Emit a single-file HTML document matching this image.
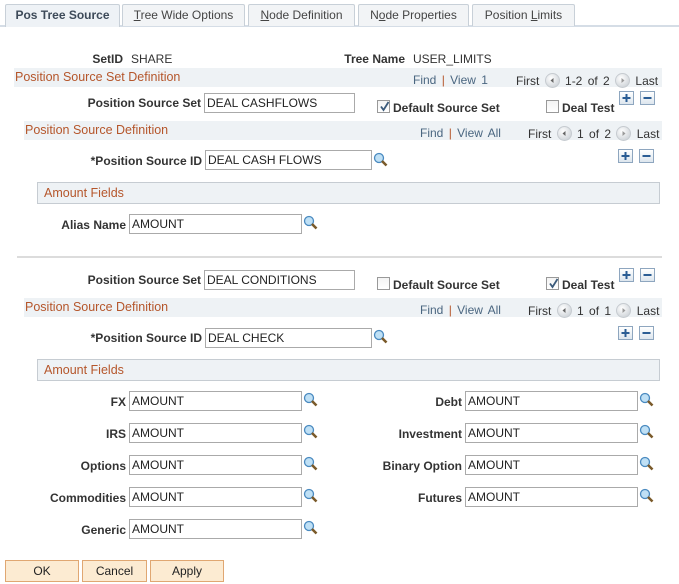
<!DOCTYPE html>
<html><head><meta charset="utf-8">
<style>
*{box-sizing:border-box;margin:0;padding:0}
body{width:679px;height:584px;background:#fff;font-family:"Liberation Sans",Arial,sans-serif;font-size:12px;color:#333;position:relative;overflow:hidden}
.tab{position:absolute;top:4px;height:22px;border:1px solid #c8d0d8;border-bottom:none;background:#f2f4f6;color:#444;font-size:12px;line-height:20px;text-align:center;border-radius:2px 2px 0 0}
.tab.on{background:#eef2f6;font-weight:bold;color:#3d4a59}
.lbl{position:absolute;font-weight:bold;text-align:right;white-space:nowrap;line-height:14px}
.val{position:absolute;white-space:nowrap;line-height:14px}
.inp{position:absolute;height:20px;border:1px solid #aaa;background:#fff;padding-left:2px;line-height:18px;color:#222}
.band{position:absolute;background:#eef2f5;height:19px}
.st{position:absolute;color:#b5562b;font-size:12.5px;line-height:14px;white-space:nowrap}
.nav{position:absolute;color:#4a6680;line-height:14px;white-space:nowrap;word-spacing:2px}
.nav .s{color:#b5562b}
.nav .g{color:#333}
.cb{position:absolute;width:13px;height:13px;border:1px solid #999;background:linear-gradient(#f3f3f3,#fff)}
.cb svg{position:absolute;left:1px;top:0}
.btn{position:absolute;width:15px;height:14px;border:1px solid #8ea6bf;background:linear-gradient(#fff,#dde6ee)}
.lk{position:absolute;width:15px;height:15px}
.arr{display:inline-block;width:15px;height:15px;vertical-align:-3px}
.ob{position:absolute;top:560px;height:22px;background:#fcebd2;border:1px solid #e0a772;text-align:center;line-height:20px;color:#222}
</style></head><body>
<svg width="0" height="0" style="position:absolute"><defs>
<radialGradient id="rg" cx="40%" cy="35%" r="70%"><stop offset="0" stop-color="#fff"/><stop offset="1" stop-color="#cdd2d7"/></radialGradient>
<g id="L"><circle cx="7.5" cy="7.5" r="7" fill="url(#rg)" stroke="#c6cbd0"/><path d="M5.5 7.5l3-2.5v5z" fill="#666"/></g>
<g id="R"><circle cx="7.5" cy="7.5" r="7" fill="url(#rg)" stroke="#c6cbd0"/><path d="M9.5 7.5l-3-2.5v5z" fill="#999"/></g>
<g id="Q"><circle cx="6" cy="6" r="4.5" fill="#bfe0f5" stroke="#4a8ac0" stroke-width="1.3"/><path d="M9 9l4.5 4.5" stroke="#7a5a2a" stroke-width="2.6"/></g>
</defs></svg>

<div style="position:absolute;left:0;top:25px;width:679px;height:2px;background:#d5dde6"></div>
<div class="tab on" style="left:5px;width:115px;height:23px">Pos Tree Source</div>
<div class="tab" style="left:122px;width:123px"><u>T</u>ree Wide Options</div>
<div class="tab" style="left:248px;width:107px"><u>N</u>ode Definition</div>
<div class="tab" style="left:358px;width:111px">N<u>o</u>de Properties</div>
<div class="tab" style="left:472px;width:103px">Position <u>L</u>imits</div>

<div class="lbl" style="right:556px;top:52px">SetID</div>
<div class="val" style="left:131px;top:52px">SHARE</div>
<div class="lbl" style="right:274px;top:52px">Tree Name</div>
<div class="val" style="left:413px;top:52px">USER_LIMITS</div>

<div class="band" style="left:14px;top:68px;width:648px"></div>
<div class="st" style="left:15px;top:70px">Position Source Set Definition</div>
<div class="nav" style="left:413px;top:73px">Find <span class="s">|</span> View 1</div>
<div class="nav" style="left:516px;top:73px"><span class="g">First</span> <svg class="arr"><use href="#L"/></svg> <span class="g">1-2 of 2</span> <svg class="arr"><use href="#R"/></svg> <span class="g">Last</span></div>

<div class="lbl" style="right:478px;top:96px">Position Source Set</div>
<div class="inp" style="left:204px;top:93px;width:151px">DEAL CASHFLOWS</div>
<div class="cb" style="left:377px;top:100px"><svg width="11" height="11"><path d="M2 5.5 L4.5 9 L9.5 1" stroke="#3b5a7a" stroke-width="1.8" fill="none"/></svg></div>
<div class="lbl" style="left:393px;top:101px">Default Source Set</div>
<div class="cb" style="left:546px;top:100px"></div>
<div class="lbl" style="left:562px;top:101px">Deal Test</div>
<div class="btn" style="left:619px;top:91px"><svg width="13" height="12"><path d="M6.5 2v8M2.5 6h8" stroke="#2b5d94" stroke-width="2"/></svg></div>
<div class="btn" style="left:640px;top:91px"><svg width="13" height="12"><path d="M2.5 6h8" stroke="#2b5d94" stroke-width="2"/></svg></div>

<div class="band" style="left:24px;top:121px;width:638px"></div>
<div class="st" style="left:25px;top:123px">Position Source Definition</div>
<div class="nav" style="left:420px;top:126px">Find <span class="s">|</span> View All</div>
<div class="nav" style="left:528px;top:126px"><span class="g">First</span> <svg class="arr"><use href="#L"/></svg> <span class="g">1 of 2</span> <svg class="arr"><use href="#R"/></svg> <span class="g">Last</span></div>

<div class="lbl" style="right:477px;top:154px">*Position Source ID</div>
<div class="inp" style="left:205px;top:150px;width:167px">DEAL CASH FLOWS</div>
<svg class="lk" style="left:373px;top:152px" viewBox="0 0 15 15"><use href="#Q"/></svg>
<div class="btn" style="left:618px;top:149px"><svg width="13" height="12"><path d="M6.5 2v8M2.5 6h8" stroke="#2b5d94" stroke-width="2"/></svg></div>
<div class="btn" style="left:639px;top:149px"><svg width="13" height="12"><path d="M2.5 6h8" stroke="#2b5d94" stroke-width="2"/></svg></div>

<div class="band" style="left:37px;top:182px;width:623px;height:22px;border:1px solid #c6ccd2"></div>
<div class="st" style="left:44px;top:186px">Amount Fields</div>

<div class="lbl" style="right:553px;top:218px">Alias Name</div>
<div class="inp" style="left:129px;top:214px;width:173px">AMOUNT</div>
<svg class="lk" style="left:303px;top:215px" viewBox="0 0 15 15"><use href="#Q"/></svg>

<div style="position:absolute;left:17px;top:256px;width:645px;height:2px;background:#dcdcdc"></div>

<div class="lbl" style="right:478px;top:273px">Position Source Set</div>
<div class="inp" style="left:204px;top:270px;width:151px">DEAL CONDITIONS</div>
<div class="cb" style="left:377px;top:277px"></div>
<div class="lbl" style="left:393px;top:278px">Default Source Set</div>
<div class="cb" style="left:546px;top:277px"><svg width="11" height="11"><path d="M2 5.5 L4.5 9 L9.5 1" stroke="#3b5a7a" stroke-width="1.8" fill="none"/></svg></div>
<div class="lbl" style="left:562px;top:278px">Deal Test</div>
<div class="btn" style="left:619px;top:268px"><svg width="13" height="12"><path d="M6.5 2v8M2.5 6h8" stroke="#2b5d94" stroke-width="2"/></svg></div>
<div class="btn" style="left:640px;top:268px"><svg width="13" height="12"><path d="M2.5 6h8" stroke="#2b5d94" stroke-width="2"/></svg></div>

<div class="band" style="left:24px;top:298px;width:638px"></div>
<div class="st" style="left:25px;top:300px">Position Source Definition</div>
<div class="nav" style="left:420px;top:303px">Find <span class="s">|</span> View All</div>
<div class="nav" style="left:528px;top:303px"><span class="g">First</span> <svg class="arr"><use href="#L"/></svg> <span class="g">1 of 1</span> <svg class="arr"><use href="#R"/></svg> <span class="g">Last</span></div>

<div class="lbl" style="right:477px;top:331px">*Position Source ID</div>
<div class="inp" style="left:205px;top:328px;width:167px">DEAL CHECK</div>
<svg class="lk" style="left:373px;top:329px" viewBox="0 0 15 15"><use href="#Q"/></svg>
<div class="btn" style="left:618px;top:326px"><svg width="13" height="12"><path d="M6.5 2v8M2.5 6h8" stroke="#2b5d94" stroke-width="2"/></svg></div>
<div class="btn" style="left:639px;top:326px"><svg width="13" height="12"><path d="M2.5 6h8" stroke="#2b5d94" stroke-width="2"/></svg></div>

<div class="band" style="left:37px;top:359px;width:623px;height:22px;border:1px solid #c6ccd2"></div>
<div class="st" style="left:44px;top:363px">Amount Fields</div>

<div class="lbl" style="right:553px;top:395px">FX</div>
<div class="inp" style="left:129px;top:391px;width:173px">AMOUNT</div>
<svg class="lk" style="left:303px;top:392px" viewBox="0 0 15 15"><use href="#Q"/></svg>
<div class="lbl" style="right:217px;top:395px">Debt</div>
<div class="inp" style="left:465px;top:391px;width:173px">AMOUNT</div>
<svg class="lk" style="left:639px;top:392px" viewBox="0 0 15 15"><use href="#Q"/></svg>

<div class="lbl" style="right:553px;top:427px">IRS</div>
<div class="inp" style="left:129px;top:423px;width:173px">AMOUNT</div>
<svg class="lk" style="left:303px;top:424px" viewBox="0 0 15 15"><use href="#Q"/></svg>
<div class="lbl" style="right:217px;top:427px">Investment</div>
<div class="inp" style="left:465px;top:423px;width:173px">AMOUNT</div>
<svg class="lk" style="left:639px;top:424px" viewBox="0 0 15 15"><use href="#Q"/></svg>

<div class="lbl" style="right:553px;top:459px">Options</div>
<div class="inp" style="left:129px;top:455px;width:173px">AMOUNT</div>
<svg class="lk" style="left:303px;top:456px" viewBox="0 0 15 15"><use href="#Q"/></svg>
<div class="lbl" style="right:217px;top:459px">Binary Option</div>
<div class="inp" style="left:465px;top:455px;width:173px">AMOUNT</div>
<svg class="lk" style="left:639px;top:456px" viewBox="0 0 15 15"><use href="#Q"/></svg>

<div class="lbl" style="right:553px;top:491px">Commodities</div>
<div class="inp" style="left:129px;top:487px;width:173px">AMOUNT</div>
<svg class="lk" style="left:303px;top:488px" viewBox="0 0 15 15"><use href="#Q"/></svg>
<div class="lbl" style="right:217px;top:491px">Futures</div>
<div class="inp" style="left:465px;top:487px;width:173px">AMOUNT</div>
<svg class="lk" style="left:639px;top:488px" viewBox="0 0 15 15"><use href="#Q"/></svg>

<div class="lbl" style="right:553px;top:523px">Generic</div>
<div class="inp" style="left:129px;top:519px;width:173px">AMOUNT</div>
<svg class="lk" style="left:303px;top:520px" viewBox="0 0 15 15"><use href="#Q"/></svg>

<div class="ob" style="left:5px;width:74px">OK</div>
<div class="ob" style="left:82px;width:65px">Cancel</div>
<div class="ob" style="left:150px;width:74px">Apply</div>
</body></html>
